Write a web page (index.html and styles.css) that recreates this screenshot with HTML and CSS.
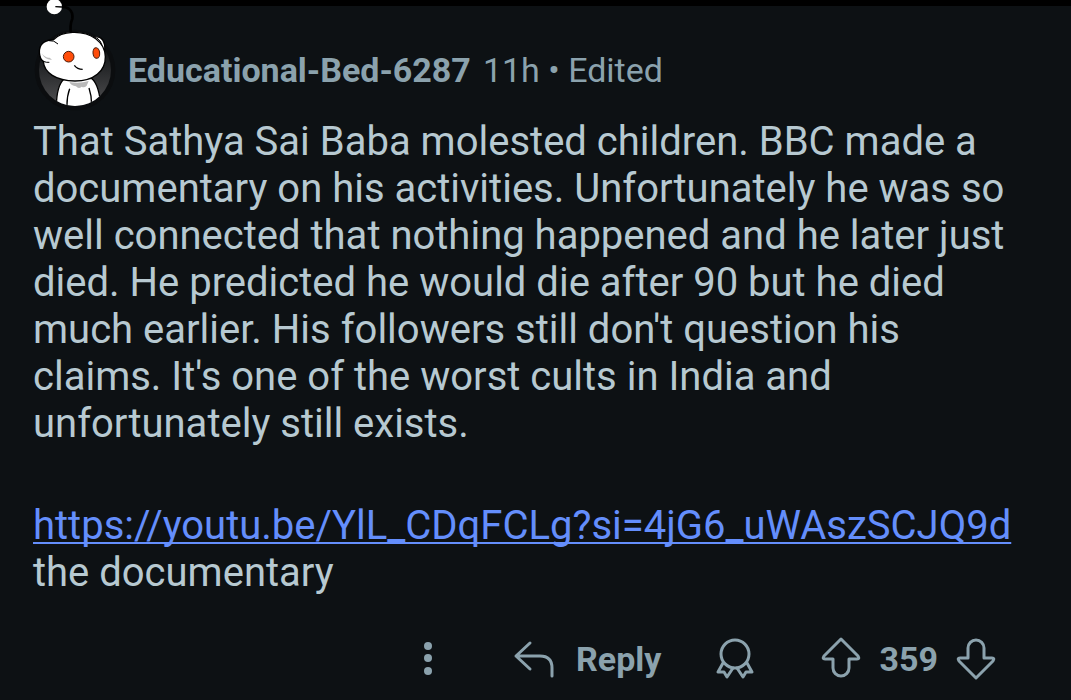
FILE: index.html
```html
<!DOCTYPE html>
<html lang="en">
  <head>
    <meta charset="UTF-8" />
    <meta name="viewport" content="width=device-width, initial-scale=1.0" />
    <title>Comment</title>
    <link rel="stylesheet" href="styles.css">
  </head>

  <body>
    <article class="comment">
      <header class="comment-header">
        <svg class="avatar" viewBox="39 84 252 252" aria-hidden="true">
          <defs>
            <linearGradient id="avatar-bg" x1="0" y1="0" x2="0" y2="1">
              <stop offset="0.3" stop-color="#17191b" />
              <stop offset="1" stop-color="#505052" />
            </linearGradient>
            <clipPath id="avatar-clip">
              <path d="M40 80H290V210H273A108 108 0 0 1 57 210H40Z" />
              <circle cx="165" cy="210" r="108" />
            </clipPath>
          </defs>
          <circle cx="165" cy="210" r="121" fill="#0b0d0f" />
          <circle cx="165" cy="210" r="108" fill="url(#avatar-bg)" />
          <!-- body -->
          <g clip-path="url(#avatar-clip)" stroke="#000" stroke-width="4">
            <path d="M133 236C116 250 109 278 109 325H243C240 280 232 250 216 236Z" fill="#fff" />
            <path d="M148 246Q178 252 206 243L200 257Q192 265 185 260Q176 268 168 259Q154 257 148 246Z" fill="#b9b9b9" stroke="none" />
            <path d="M149 266Q140 290 141 322M207 264Q216 290 215 322" fill="none" />
          </g>
          <!-- antenna -->
          <path d="M112 20C145 18 160 30 157 56C152 68 149 80 153 103" fill="none" stroke="#000" stroke-width="8" />
          <circle cx="103" cy="20" r="23" fill="#fff" />
          <path d="M106 20L126 21" stroke="#000" stroke-width="4" />
          <!-- head -->
          <path d="M224 112C244 105 257 125 254 152Z" fill="#fff" stroke="#000" stroke-width="4" />
          <path d="M158 97C213 95 255 126 256 170C257 213 221 243 165 243C108 243 72 218 70 184C57 176 52 143 69 129C80 118 94 121 101 119C114 104 134 98 158 97Z" fill="#fff" stroke="#000" stroke-width="4" />
          <path d="M87 122Q102 120 114 132M70 184Q79 188 88 187M231 114Q243 122 246 136" fill="none" stroke="#000" stroke-width="3" />
          <path d="M65 160Q75 181 96 179L89 173Q77 175 65 160Z" fill="#bdbdbd" />
          <circle cx="146" cy="170" r="16" fill="#ff4d0a" stroke="#4a1b0a" stroke-width="3" />
          <ellipse cx="229" cy="159" rx="10" ry="16" fill="#ff4d0a" stroke="#4a1b0a" stroke-width="3" transform="rotate(-6 229 159)" />
          <path d="M163 196Q172 208 188 208" fill="none" stroke="#000" stroke-width="4" />
        </svg>
        <p class="comment-meta">
          <strong class="username">Educational-Bed-6287</strong>
          <span>11h • Edited</span>
        </p>
      </header>

      <div class="comment-body">
        <p>That Sathya Sai Baba molested children. BBC made a documentary on his activities. Unfortunately he was so well connected that nothing happened and he later just died. He predicted he would die after 90 but he died much earlier. His followers still don't question his claims. It's one of the worst cults in India and unfortunately still exists.</p>
        <p><a href="https://youtu.be/YlL_CDqFCLg?si=4jG6_uWAszSCJQ9d">https://youtu.be/YlL_CDqFCLg?si=4jG6_uWAszSCJQ9d</a> the documentary</p>
      </div>

      <footer class="comment-actions">
        <button class="action more" type="button" aria-label="More options">
          <svg class="icon" viewBox="0 0 40 40" aria-hidden="true">
            <g fill="currentColor">
              <circle cx="20" cy="7" r="4" />
              <circle cx="20" cy="19" r="4" />
              <circle cx="20" cy="32" r="4" />
            </g>
          </svg>
        </button>
        <button class="action" type="button">
          <svg class="icon stroke" viewBox="0 0 40 40" aria-hidden="true">
            <path d="M16 4L2 17L16 30M2 17H26Q38 17 38 29V37" />
          </svg>
          Reply
        </button>
        <button class="action" type="button" aria-label="Give award">
          <svg class="icon stroke" viewBox="0 0 40 40" aria-hidden="true">
            <circle cx="20" cy="15" r="14" />
            <path d="M8 24L3 33L9 33L12 38L18 29M32 24L37 33L31 33L28 38L22 29" />
          </svg>
        </button>
        <div class="votes">
          <button class="action" type="button" aria-label="Upvote">
            <svg class="icon stroke" viewBox="0 0 40 40" aria-hidden="true">
              <path d="M20 0L37 17Q39 20 36 20H28V29A8 8 0 0 1 12 29V20H4Q1 20 3 17Z" />
            </svg>
          </button>
          <span>359</span>
          <button class="action" type="button" aria-label="Downvote">
            <svg class="icon stroke" viewBox="0 0 40 40" aria-hidden="true">
              <path d="M20 39L37 22Q39 19 36 19H28V9A8 8 0 0 0 12 9V19H4Q1 19 3 22Z" />
            </svg>
          </button>
        </div>
      </footer>
    </article>
  </body>
</html>
```
FILE: styles.css
```css
body {
  margin: 0;
  background-color: #0d1114;
  color: #b7c9d1;
  font-family: Roboto, "Liberation Sans", sans-serif;
}

p {
  margin: 0;
}

.comment {
  border-top: 6px solid #000;
  padding: 22px 48px 16px 33px;
}

.comment-header {
  display: flex;
  align-items: center;
  gap: 11px;
}

.avatar {
  flex: none;
  width: 84px;
  height: 84px;
  overflow: visible;
}

.comment-meta {
  display: flex;
  gap: 12px;
  font-size: 34px;
  color: #8ba2ad;
}

.username {
  font-weight: 700;
}

.comment-body {
  display: flex;
  flex-direction: column;
  gap: 55px;
  margin-top: 6px;
  font-size: 40px;
  line-height: 47px;
}

.comment-body a {
  color: #648efc;
  text-decoration-thickness: 2px;
  text-underline-offset: 3px;
  text-decoration-skip-ink: none;
}

.comment-actions {
  display: flex;
  justify-content: flex-end;
  align-items: center;
  gap: 54px;
  margin-top: 43px;
  padding-right: 27px;
  font-size: 34px;
  font-weight: 700;
  color: #8ba2ad;
}

.action {
  display: flex;
  align-items: center;
  gap: 22px;
  padding: 0;
  border: 0;
  background: none;
  color: inherit;
  font: inherit;
  cursor: pointer;
}

.more {
  margin-right: 12px;
}

.votes {
  display: flex;
  align-items: center;
  gap: 18px;
  margin-left: 12px;
}

.icon {
  width: 40px;
  height: 40px;
  overflow: visible;
}

.stroke {
  fill: none;
  stroke: currentColor;
  stroke-width: 3;
  stroke-linecap: round;
  stroke-linejoin: round;
}
```
